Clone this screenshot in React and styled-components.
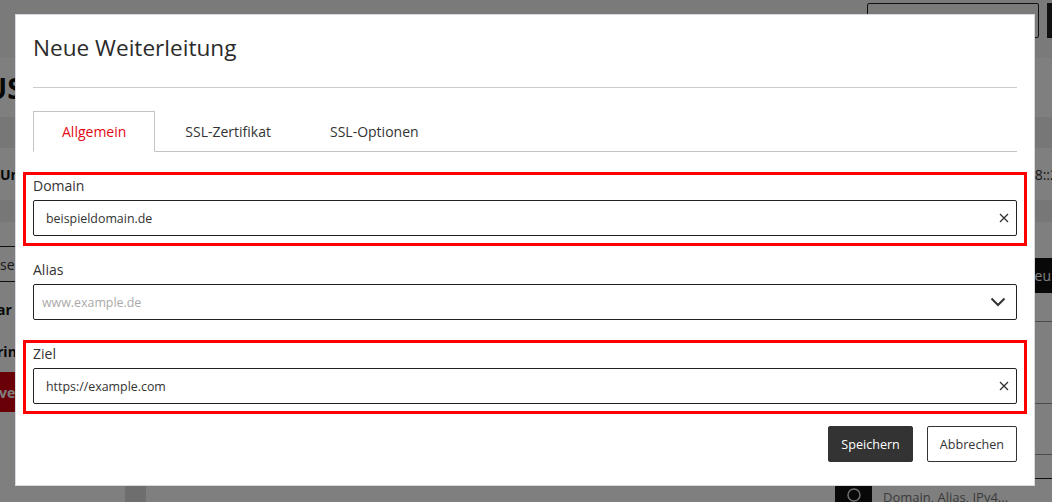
import React from "react";
import styled, { createGlobalStyle } from "styled-components";

const GlobalStyle = createGlobalStyle`
  html, body {
    margin: 0;
    padding: 0;
    overflow: hidden;
  }
  body {
    font-family: "Open Sans", "Noto Sans", sans-serif;
    color: #333;
    background: #fff;
  }
  * {
    box-sizing: border-box;
  }
`;

const CloseIcon = () => (
  <svg width="10" height="10" viewBox="0 0 10 10">
    <path d="M1 1L9 9M9 1L1 9" stroke="#333" strokeWidth="1.3" fill="none" />
  </svg>
);

const ChevronIcon = () => (
  <svg width="16" height="10" viewBox="0 0 16 10">
    <path d="M1.5 1.5L8 8L14.5 1.5" stroke="#333" strokeWidth="2" fill="none" />
  </svg>
);

const SearchIcon = () => (
  <svg width="16" height="16" viewBox="0 0 16 16">
    <circle cx="8" cy="8" r="6" stroke="#ddd" strokeWidth="1.5" fill="none" />
  </svg>
);

const App = () => {
  return (
    <>
      <GlobalStyle />
      <Page>
        <TopBar>
          <OutlineBtn />
          <DarkBtn />
        </TopBar>
        <HeadRow>
          <PageTitle>US</PageTitle>
        </HeadRow>
        <Band h={31} />
        <InfoRow>
          <Strong>Un</Strong>
          <Address>8::2</Address>
        </InfoRow>
        <Band h={22} />
        <Lower>
          <LeftCol>
            <SelectBox>ser</SelectBox>
            <SideText mt={18}>ar</SideText>
            <SideText mt={22}>rin</SideText>
            <RedBtn>ve</RedBtn>
          </LeftCol>
          <Strip />
          <MainCol>
            <NewBtn>Neu</NewBtn>
            <Line mt={28} />
            <Line mt={81} />
            <Line mt={50} />
            <Line mt={23} dark />
            <SearchBar>
              <SearchBtn>
                <SearchIcon />
              </SearchBtn>
              <SearchHint>Domain, Alias, IPv4...</SearchHint>
            </SearchBar>
          </MainCol>
        </Lower>
      </Page>

      <Overlay>
        <Modal>
          <Title>Neue Weiterleitung</Title>
          <Rule />
          <Tabs>
            <Tab active>Allgemein</Tab>
            <Tab>SSL-Zertifikat</Tab>
            <Tab>SSL-Optionen</Tab>
          </Tabs>
          <Form>
            <Group marked>
              <Label>Domain</Label>
              <Field pl={12} pr={7}>
                <Input readOnly defaultValue="beispieldomain.de" />
                <CloseIcon />
              </Field>
            </Group>
            <Group>
              <Label>Alias</Label>
              <Field pl={8} pr={10}>
                <Input readOnly placeholder="www.example.de" />
                <ChevronIcon />
              </Field>
            </Group>
            <Group marked>
              <Label>Ziel</Label>
              <Field pl={12} pr={7}>
                <Input readOnly defaultValue="https://example.com" />
                <CloseIcon />
              </Field>
            </Group>
          </Form>
          <Actions>
            <Button primary>Speichern</Button>
            <Button>Abbrechen</Button>
          </Actions>
        </Modal>
      </Overlay>
    </>
  );
};

export default App;

// background page
const Page = styled.div`
  width: 100%;
  height: 100vh;
  overflow: hidden;
  background: #fff;
  display: flex;
  flex-direction: column;
`;
const TopBar = styled.div`
  height: 58px;
  flex-shrink: 0;
  background: #f4f4f4;
  display: flex;
  justify-content: flex-end;
  align-items: flex-start;
  gap: 8px;
  padding-top: 3px;
`;
const OutlineBtn = styled.div`
  width: 172px;
  height: 35px;
  border: 1px solid #222;
  border-radius: 2px;
  flex-shrink: 0;
`;
const DarkBtn = styled.div`
  width: 40px;
  height: 35px;
  background: #222;
  margin-right: -35px;
  flex-shrink: 0;
`;
const HeadRow = styled.div`
  height: 59px;
  flex-shrink: 0;
  display: flex;
  align-items: center;
`;
const PageTitle = styled.h1`
  margin: 0 0 0 -14px;
  font-size: 28px;
  font-weight: 700;
  color: #111;
`;
const Band = styled.div`
  height: ${(props) => props.h}px;
  flex-shrink: 0;
  background: #eee;
`;
const InfoRow = styled.div`
  height: 52px;
  flex-shrink: 0;
  display: flex;
  justify-content: space-between;
  align-items: center;
  font-size: 14px;
`;
const Strong = styled.span`
  font-weight: 700;
  color: #111;
`;
const Address = styled.span`
  margin-right: -6px;
  color: #333;
`;
const Lower = styled.div`
  flex: 1;
  display: grid;
  grid-template-columns: 125px 21px 1fr;
`;
const LeftCol = styled.div`
  display: flex;
  flex-direction: column;
  padding-top: 24px;
  font-size: 14px;
`;
const SelectBox = styled.div`
  height: 36px;
  border-top: 1px solid #222;
  border-bottom: 1px solid #222;
  display: flex;
  align-items: center;
  color: #333;
`;
const SideText = styled.div`
  margin-top: ${(props) => props.mt}px;
  margin-left: -3px;
  line-height: 20px;
  font-weight: 700;
  color: #111;
`;
const RedBtn = styled.div`
  margin-top: 10px;
  height: 40px;
  background: #d4000f;
  color: #fff;
  font-weight: 700;
  display: flex;
  align-items: center;
  margin-left: -1px;
`;
const Strip = styled.div`
  background: #dcdcdc;
`;
const MainCol = styled.div`
  display: flex;
  flex-direction: column;
  align-items: flex-end;
  padding-top: 36px;
`;
const NewBtn = styled.div`
  height: 35px;
  width: 80px;
  margin-right: -40px;
  background: #111;
  color: #fff;
  font-size: 14px;
  display: flex;
  align-items: center;
  padding-left: 12px;
`;
const Line = styled.div`
  margin-top: ${(props) => props.mt}px;
  width: 200px;
  height: 1px;
  background: ${(props) => (props.dark ? "#222" : "#999")};
`;
const SearchBar = styled.div`
  margin-top: 6px;
  width: 217px;
  height: 36px;
  display: flex;
  align-items: stretch;
`;
const SearchBtn = styled.div`
  width: 37px;
  background: #111;
  display: flex;
  justify-content: center;
  padding-top: 2px;
`;
const SearchHint = styled.div`
  padding: 3px 0 0 11px;
  font-size: 13px;
  color: #777;
  white-space: nowrap;
`;

// modal
const Overlay = styled.div`
  position: fixed;
  inset: 0;
  background: rgba(0, 0, 0, 0.5);
  display: flex;
  align-items: flex-start;
  padding: 14px 0 0 15px;
`;
const Modal = styled.div`
  width: 1020px;
  background: #fff;
  border: 1px solid #d8d8e0;
  padding: 18px 17px 23px;
  display: flex;
  flex-direction: column;
`;
const Title = styled.h2`
  margin: 0;
  font-size: 22.6px;
  line-height: 30px;
  font-weight: 400;
  color: #2b2b2b;
`;
const Rule = styled.div`
  margin-top: 24px;
  height: 1px;
  background: #ccc;
`;
const Tabs = styled.div`
  margin-top: 23px;
  display: flex;
  border-bottom: 1px solid #c4c4c4;
`;
const Tab = styled.div`
  height: 41px;
  margin-bottom: -1px;
  margin-right: 1px;
  padding: 0 28px;
  display: flex;
  align-items: center;
  font-size: 14px;
  color: ${(props) => (props.active ? "#e30613" : "#333")};
  background: ${(props) => (props.active ? "#fff" : "transparent")};
  border: 1px solid ${(props) => (props.active ? "#c4c4c4" : "transparent")};
  border-bottom-color: ${(props) => (props.active ? "#fff" : "transparent")};
`;
const Form = styled.div`
  margin-top: 24px;
  display: flex;
  flex-direction: column;
  gap: 24px;
`;
const Group = styled.div`
  position: relative;

  &::after {
    content: "";
    display: ${(props) => (props.marked ? "block" : "none")};
    position: absolute;
    top: -4px;
    left: -10px;
    right: -10px;
    bottom: -10px;
    border: 3px solid #f00;
    pointer-events: none;
  }
`;
const Label = styled.label`
  display: block;
  font-size: 14px;
  line-height: 20px;
  margin-bottom: 4px;
  color: #333;
`;
const Field = styled.div`
  height: 36px;
  border: 1px solid #222;
  border-radius: 2px;
  display: flex;
  align-items: center;
  padding: 0 ${(props) => props.pr}px 0 ${(props) => props.pl}px;
`;
const Input = styled.input`
  flex: 1;
  min-width: 0;
  border: none;
  outline: none;
  background: transparent;
  padding: 0;
  font-family: inherit;
  font-size: 12.4px;
  color: #333;

  &::placeholder {
    color: #aaa;
    opacity: 1;
  }
`;
const Actions = styled.div`
  margin-top: 22px;
  display: flex;
  justify-content: flex-end;
  gap: 14px;
`;
const Button = styled.button`
  height: 36px;
  padding: 0 12px;
  font-family: inherit;
  font-size: 12.6px;
  border-radius: 2px;
  border: 1px solid #333;
  background: ${(props) => (props.primary ? "#333" : "#fff")};
  color: ${(props) => (props.primary ? "#fff" : "#333")};
  cursor: pointer;
`;
